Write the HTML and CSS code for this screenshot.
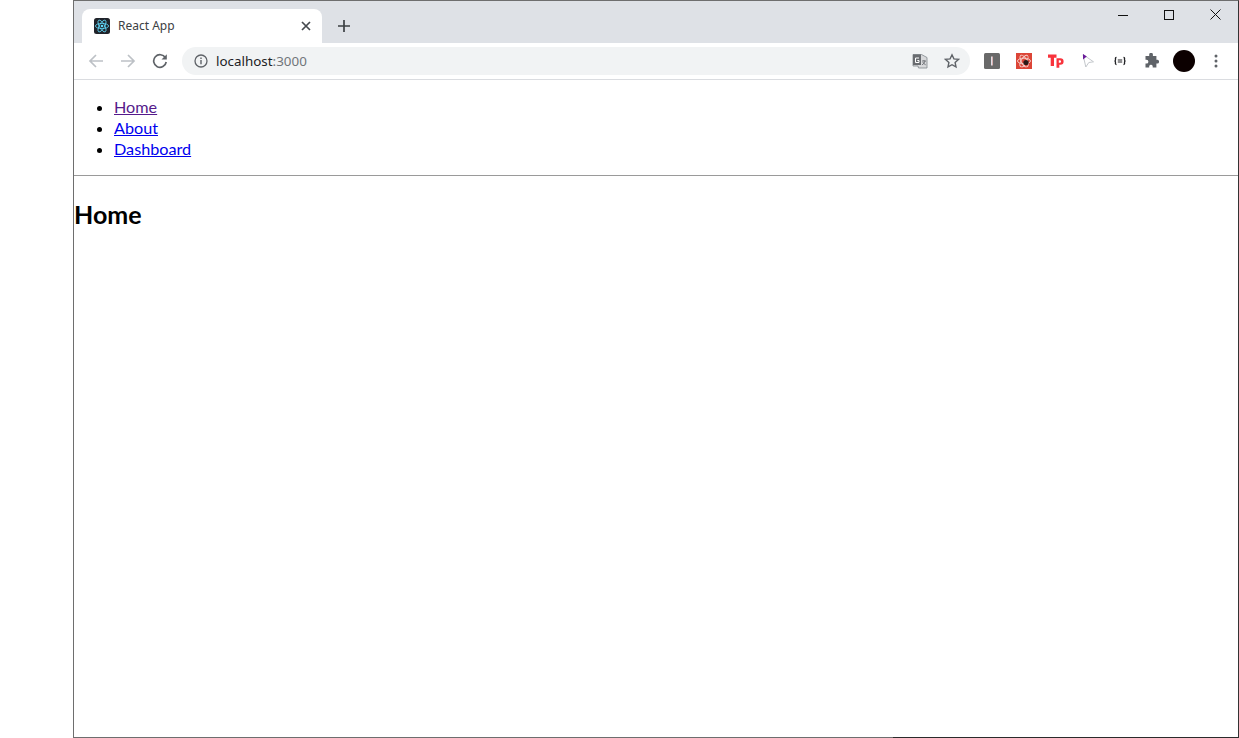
FILE: index.html
```html
<!DOCTYPE html>
<html lang="en">
<head>
<meta charset="utf-8">
<title>React App</title>
<link rel="stylesheet" href="styles.css">
</head>
<body>
<div class="window">
  <div class="tabbar">
    <div class="tab">
      <svg class="favicon" width="16" height="16" viewBox="0 0 16 16"><rect width="16" height="16" rx="2.5" fill="#20232a"/><g fill="none" stroke="#61dafb" stroke-width=".8"><ellipse cx="8" cy="8" rx="6.6" ry="2.6"/><ellipse cx="8" cy="8" rx="6.6" ry="2.6" transform="rotate(60 8 8)"/><ellipse cx="8" cy="8" rx="6.6" ry="2.6" transform="rotate(120 8 8)"/></g><circle cx="8" cy="8" r="1.3" fill="#61dafb"/></svg>
      <span class="tab-title">React App</span>
      <svg class="tab-close" width="10" height="10" viewBox="0 0 10 10"><path d="M1 1l8 8M9 1l-8 8" stroke="#45494e" stroke-width="1.7"/></svg>
    </div>
    <svg class="new-tab" width="12" height="12" viewBox="0 0 12 12"><path d="M6 0v12M0 6h12" stroke="#3c4043" stroke-width="1.7"/></svg>
    <div class="win-controls">
      <svg width="10" height="10" viewBox="0 0 10 10"><path d="M0 5.5h10" stroke="#111" stroke-width="1"/></svg>
      <svg width="10" height="10" viewBox="0 0 10 10"><rect x=".5" y=".5" width="9" height="9" fill="none" stroke="#111"/></svg>
      <svg width="11" height="11" viewBox="0 0 11 11"><path d="M.5.5l10 10M10.500.5l-10 10" stroke="#111" stroke-width="1"/></svg>
    </div>
  </div>
  <div class="toolbar">
    <div class="nav-buttons">
      <svg width="16" height="16" viewBox="0 0 16 16"><path d="M15 8H2M8 2L2 8l6 6" fill="none" stroke="#bdc1c6" stroke-width="1.7"/></svg>
      <svg width="16" height="16" viewBox="0 0 16 16"><path d="M1 8h13M8 2l6 6-6 6" fill="none" stroke="#bdc1c6" stroke-width="1.7"/></svg>
      <svg width="16" height="16" viewBox="0 0 16 16"><path d="M13.400 4.800A6.300 6.300 0 1 0 14.200 9" fill="none" stroke="#5f6368" stroke-width="1.700"/><path d="M14.800 1.200v5.300H9.500z" fill="#5f6368"/></svg>
    </div>
    <div class="omnibox">
      <svg class="info" width="14" height="14" viewBox="0 0 14 14"><circle cx="7" cy="7" r="6" fill="none" stroke="#5f6368" stroke-width="1.300"/><path d="M7 6v4.200M7 3.500v1.400" stroke="#5f6368" stroke-width="1.400"/></svg>
      <span class="url"><span class="host">localhost</span>:3000</span>
      <svg class="translate" width="16" height="16" viewBox="0 0 16 16"><path d="M1 1.500h8.500l5.500 3V15H6.500L6 13H1z" fill="#d8d9db" stroke="#80868b" stroke-width=".8"/><rect x="1" y="1.500" width="8" height="10.500" fill="#696c70"/><path d="M7 5H3.500v4.500H7V7.500H5.300" fill="none" stroke="#fff" stroke-width="1"/><path d="M10 8h4M12 7v1M13 8c-.4 2-1.500 3-3 3.800M10.800 9c.5 1.200 1.500 2.200 2.900 2.800" fill="none" stroke="#5f6368" stroke-width=".8"/></svg>
      <svg class="star" width="16" height="16" viewBox="0 0 16 16"><path d="M8 1.800l1.900 4.100 4.500.5-3.300 3 .9 4.500L8 11.700l-4 2.200.9-4.500-3.300-3 4.500-.5z" fill="none" stroke="#5f6368" stroke-width="1.400"/></svg>
    </div>
    <div class="extensions">
      <svg width="16" height="16" viewBox="0 0 16 16"><rect width="16" height="16" rx="1.500" fill="#696969"/><rect x="7" y="3.500" width="1" height="9" fill="#e0e0e8"/><rect x="8" y="3.500" width="1" height="9" fill="#d8b0b0"/></svg>
      <svg width="16" height="16" viewBox="0 0 16 16"><rect width="16" height="16" fill="#dc4537"/><g fill="none" stroke="#f6d5d0" stroke-width=".9"><ellipse cx="8" cy="8" rx="6.500" ry="2.800"/><ellipse cx="8" cy="8" rx="6.500" ry="2.800" transform="rotate(60 8 8)"/><ellipse cx="8" cy="8" rx="6.500" ry="2.800" transform="rotate(120 8 8)"/></g><circle cx="10" cy="9.500" r="2.600" fill="#2a1a18"/></svg>
      <svg width="16" height="16" viewBox="0 0 16 16"><path d="M0 1.500h8.500v3.200H6V13H2.700V4.700H0z" fill="#f8333c"/><path d="M8.500 5.200h3.800a3 3 0 0 1 0 6.600h-1v3H8.500zM10.800 7.200v2.600h1a1.300 1.300 0 0 0 0-2.600z" fill="#f8333c" fill-rule="evenodd"/></svg>
      <svg width="16" height="16" viewBox="0 0 16 16"><path d="M3 1.500l10.500 7.300-4.700.7-3 4.500z" fill="#fff" stroke="#c4c8cc" stroke-width="1"/><path d="M3 1l3.800 2.600L3 6.500z" fill="#6a1b9a"/></svg>
      <svg width="16" height="16" viewBox="0 0 16 16"><path d="M4.500 4.500c-1.500 0-1 1.300-1 2.300S3.300 8 2.500 8c.8 0 1 .4 1 1.200s-.5 2.300 1 2.300M11.500 4.500c1.500 0 1 1.300 1 2.300s.2 1.200 1 1.200c-.8 0-1 .4-1 1.200s.5 2.300-1 2.300" fill="none" stroke="#202124" stroke-width="1.300"/><path d="M5.800 7h4.400M5.800 9h4.400" stroke="#202124" stroke-width="1.100"/></svg>
      <svg class="puzzle" width="16" height="16" viewBox="0 0 16 16"><path d="M6.200 1.200a1.900 1.900 0 0 1 3.700 0V3h3.500v3.700h1.100a2 2 0 0 1 0 3.900h-1.100v3.900H9.700v-1.300a1.800 1.800 0 0 0-3.500 0v1.300H2.500v-3.900h1a1.900 1.900 0 0 0 0-3.800h-1V3h3.700z" fill="#5f6368"/></svg>
      <div class="avatar"></div>
      <svg class="menu" width="4" height="14" viewBox="0 0 4 14"><circle cx="2" cy="2" r="1.500" fill="#5f6368"/><circle cx="2" cy="7" r="1.500" fill="#5f6368"/><circle cx="2" cy="12" r="1.500" fill="#5f6368"/></svg>
    </div>
  </div>
  <main class="page">
    <ul class="nav-list">
      <li><a class="visited" href="#home">Home</a></li>
      <li><a href="#about">About</a></li>
      <li><a href="#dashboard">Dashboard</a></li>
    </ul>
    <hr class="rule">
    <h2 class="heading">Home</h2>
  </main>
  <div class="window-foot"></div>
</div>
</body>
</html>
```
FILE: styles.css
```css
* { box-sizing: border-box; }
html, body { margin: 0; height: 100%; background: #fff; overflow: hidden; }
body { padding-left: 73px; font-family: "Noto Sans", sans-serif; }
.window {
  height: 738px;
  width: 1166px;
  border: 1px solid #6e6e6e;
  border-right-color: #333;
  border-bottom: 0;
  display: flex;
  flex-direction: column;
}
.window-foot {
  height: 1px;
  flex: none;
  background: linear-gradient(to right, #6e6e6e 819px, #2b2b2b 819px);
}
.tabbar {
  height: 42px;
  background: #dee1e6;
  display: flex;
  align-items: flex-end;
  padding-left: 8px;
  flex: none;
}
.tab {
  width: 240px;
  height: 34px;
  background: #fff;
  border-radius: 8px 8px 0 0;
  display: flex;
  align-items: center;
  padding: 0 11px 0 12px;
}
.favicon { flex: none; margin-right: 8px; }
.tab-title { font-size: 12px; line-height: 16px; padding-bottom: 1px; color: #3c4043; flex: 1; white-space: nowrap; }
.tab-close { flex: none; }
.new-tab { margin: 0 0 11px 16px; flex: none; }
.win-controls {
  margin-left: auto;
  align-self: flex-start;
  display: flex;
  align-items: center;
  gap: 36px;
  padding: 8px 17px 0 0;
}
.toolbar {
  height: 37px;
  background: #fff;
  border-bottom: 1px solid #dadce0;
  display: flex;
  align-items: center;
  flex: none;
}
.nav-buttons {
  display: flex;
  gap: 16px;
  padding-left: 14px;
  width: 108px;
}
.omnibox {
  width: 788px;
  height: 28px;
  border-radius: 14px;
  background: #f1f3f4;
  display: flex;
  align-items: center;
  padding: 0 10px 0 12px;
}
.info { flex: none; margin-right: 8px; }
.url { font-size: 13.4px; color: #70757a; flex: 1; }
.host { color: #202124; }
.translate { margin-right: 16px; flex: none; }
.star { flex: none; }
.extensions {
  display: flex;
  align-items: center;
  gap: 16px;
  padding-left: 14px;
}
.puzzle { margin-left: -1px; }
.avatar { width: 22px; height: 22px; border-radius: 50%; background: #0c0000; margin: 0 -3px 0 -2px; }
.menu { margin-left: 6px; }
.page { flex: 1; color: #000; }
.nav-list { margin: 16px 0; padding-left: 40px; font-family: Lato, sans-serif; font-size: 16.2px; line-height: 21px; }
.nav-list a { color: #00e; }
.nav-list a.visited { color: #551a8b; }
.rule { margin: 0; border: 0; border-top: 1px solid #9a9a9a; }
.heading { margin: 19px 0 0; font-family: Lato, sans-serif; font-size: 25px; line-height: 38px; font-weight: 700; }
```
